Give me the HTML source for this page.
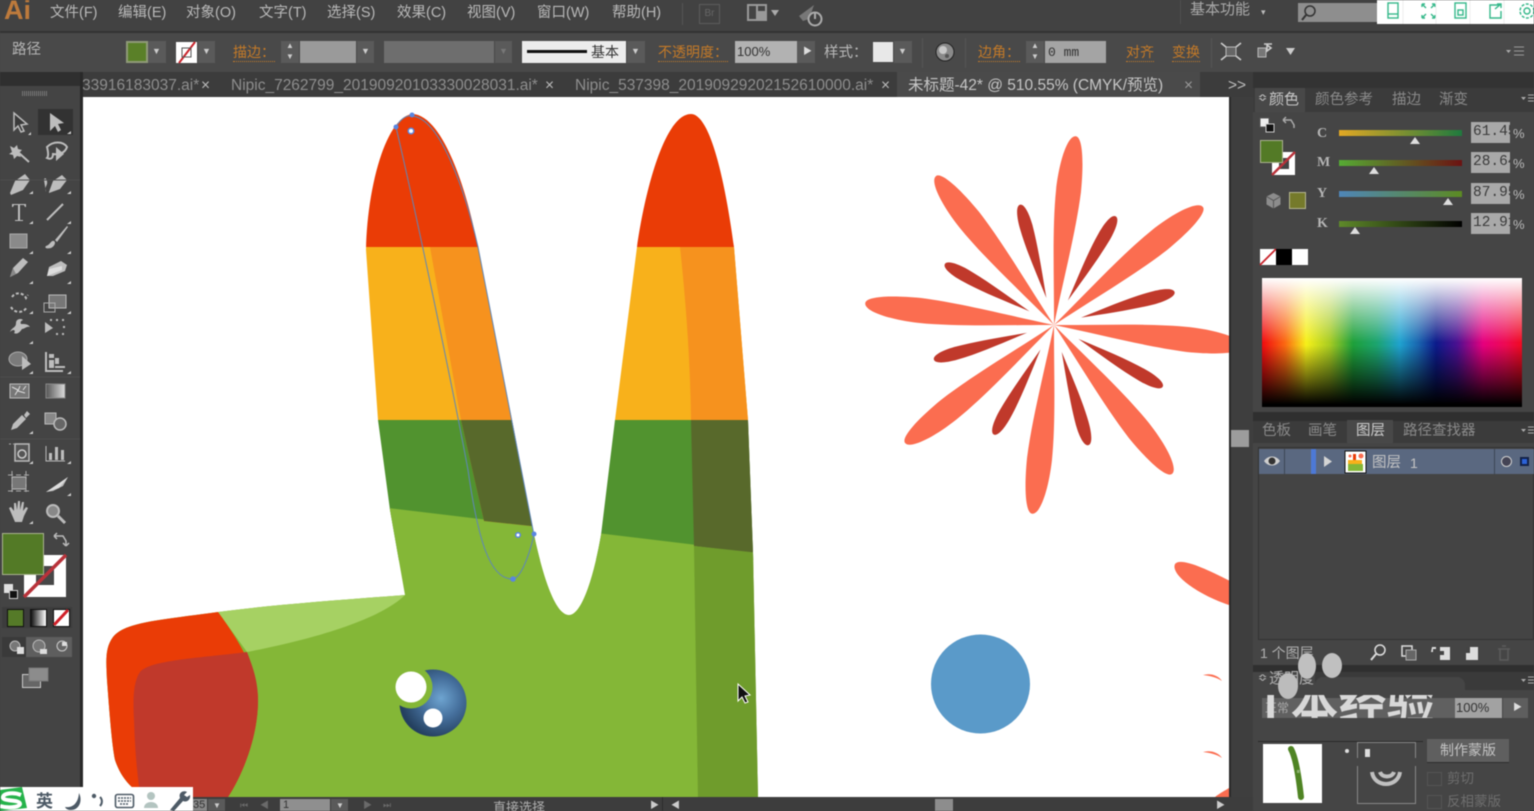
<!DOCTYPE html>
<html lang="zh"><head><meta charset="utf-8"><title>Illustrator</title>
<style>
html,body{margin:0;padding:0;background:#434343;}
#r{position:relative;width:1534px;height:811px;overflow:hidden;background:#444;font-family:"Liberation Sans","Noto Sans CJK SC",sans-serif;filter:blur(.45px);}
#r div,#r span.a{position:absolute;}
.t{position:absolute;white-space:nowrap;line-height:1;color:#bdbdbd;}
.m{font-size:14.5px;top:6px;color:#b9b9b9}
.o{font-size:14.5px;top:45px;color:#c47a28;border-bottom:1px dotted #c47a28;padding-bottom:2px}
.c{font-size:14.5px;top:46px;color:#b9b9b9}
.tab{font-size:15.5px;top:78px;color:#8e8e8e}
.p{font-size:15px;color:#8a8a8a}
.dd{background:#5a5a5a}
.lab{font-family:"Liberation Serif",serif;font-size:14px;font-weight:bold;color:#b5b5b5}
.val{background:#a9a9a9;width:39px;height:21px;left:1471px;font:14.5px/21px "Liberation Mono",monospace;color:#3a3a3a;text-indent:2px;overflow:hidden;white-space:nowrap}
.trk{left:1339px;width:123px;height:6px}
.th{width:0;height:0;border-left:5px solid transparent;border-right:5px solid transparent;border-bottom:7px solid #ddd}
svg{position:absolute;overflow:visible}
</style></head><body><div id="r">

<!-- top bars -->
<div style="left:0;top:0;width:1534px;height:31px;background:#424242"></div>
<div style="left:0;top:31px;width:1534px;height:2px;background:#333"></div>
<div style="left:0;top:33px;width:1534px;height:39px;background:#494949"></div>
<div style="left:0;top:72px;width:1534px;height:25px;background:#3c3c3c"></div>
<div style="left:0;top:72px;width:80px;height:14px;background:#2f2f2f"></div>

<span class="t" style="left:4px;top:-3px;font-size:27px;font-weight:bold;color:#bd7a3c">Ai</span>
<span class="t m" style="left:50px">文件(F)</span>
<span class="t m" style="left:118px">编辑(E)</span>
<span class="t m" style="left:186px">对象(O)</span>
<span class="t m" style="left:259px">文字(T)</span>
<span class="t m" style="left:327px">选择(S)</span>
<span class="t m" style="left:397px">效果(C)</span>
<span class="t m" style="left:467px">视图(V)</span>
<span class="t m" style="left:537px">窗口(W)</span>
<span class="t m" style="left:612px">帮助(H)</span>
<div style="left:682px;top:3px;width:1px;height:22px;background:#555"></div>
<div style="left:699px;top:4px;width:19px;height:18px;border:1px solid #5c5c5c;color:#666;font:10px/18px 'Liberation Sans';text-align:center">Br</div>
<svg style="left:746px;top:2px" width="90" height="26">
<rect x="1" y="2" width="20" height="17" fill="#999"/><rect x="3" y="4" width="7" height="13" fill="#444"/><rect x="12" y="4" width="7" height="5" fill="#444"/>
<path d="M25 8h8l-4 6z" fill="#aaa"/>
<path d="M53 14L68 3l-5 14-6 2z" fill="#777"/><circle cx="69" cy="17" r="6.5" fill="none" stroke="#aaa" stroke-width="2"/><path d="M69 10v7" stroke="#aaa" stroke-width="2"/></svg>
<div style="left:1180px;top:0;width:1px;height:24px;background:#4f4f4f"></div>
<span class="t" style="left:1190px;top:2px;font-size:15px;color:#a9a9a9">基本功能</span>
<span class="t" style="left:1261px;top:8px;font-size:9px;color:#bbb">▾</span>
<div style="left:1298px;top:3px;width:80px;height:19px;background:#8e8e8e"></div>
<svg style="left:1300px;top:4px" width="20" height="18"><circle cx="10" cy="7" r="5" fill="none" stroke="#333" stroke-width="1.5"/><path d="M6 11l-4 5" stroke="#333" stroke-width="2"/></svg>
<div style="left:1377px;top:0;width:157px;height:24px;background:#fff"></div>
<svg style="left:1377px;top:0" width="157" height="24" fill="none" stroke="#35b88a" stroke-width="1.4">
<rect x="11" y="3" width="10" height="15"/><path d="M11 14h10"/>
<path d="M45 4l4 4M58 4l-4 4M45 18l4-4M58 18l-4-4M45 4h3M45 4v3M58 4h-3M58 4v3M45 18h3M45 18v-3M58 18h-3M58 18v-3"/>
<rect x="78" y="3" width="11" height="15"/><rect x="81" y="10" width="5" height="5"/>
<path d="M122 5h-9v13h11v-7M118 9l6-5M120 4h4v4"/>
<circle cx="150" cy="11" r="3"/><circle cx="150" cy="11" r="7" stroke-dasharray="3 1.5"/>
<path d="M26 0v24M59 0v24M93 0v24M127 0v24" stroke="#eee" stroke-width="1"/></svg>

<!-- control bar -->
<span class="t" style="left:12px;top:43px;font-size:14.5px;color:#b5b5b5">路径</span>
<div style="left:126px;top:41px;width:22px;height:22px;background:#5a8028;box-sizing:border-box;border:2px solid #8f9a78"></div>
<div class="dd" style="left:148px;top:41px;width:18px;height:22px"></div><span class="t" style="left:152px;top:47px;font-size:9px;color:#ccc">▼</span>
<div style="left:176px;top:42px;width:21px;height:21px;background:#fff"></div>
<svg style="left:176px;top:42px" width="21" height="21"><path d="M3 21L19 0" stroke="#c8242c" stroke-width="2"/><rect x="6" y="6" width="9" height="9" fill="none" stroke="#555"/></svg>
<div class="dd" style="left:198px;top:41px;width:17px;height:22px"></div><span class="t" style="left:202px;top:47px;font-size:9px;color:#ccc">▼</span>
<span class="t o" style="left:233px;font-size:14px">描边：</span>
<div class="dd" style="left:281px;top:41px;width:18px;height:22px"></div><span class="t" style="left:286px;top:42px;font-size:8px;color:#ccc">▲</span><span class="t" style="left:286px;top:53px;font-size:8px;color:#ccc">▼</span>
<div style="left:300px;top:41px;width:56px;height:22px;background:#9a9a9a"></div>
<div class="dd" style="left:357px;top:41px;width:17px;height:22px"></div><span class="t" style="left:361px;top:47px;font-size:9px;color:#ccc">▼</span>
<div style="left:384px;top:41px;width:110px;height:22px;background:#6e6e6e"></div>
<div class="dd" style="left:495px;top:41px;width:17px;height:22px"></div><span class="t" style="left:499px;top:47px;font-size:9px;color:#777">▼</span>
<div style="left:522px;top:41px;width:104px;height:22px;background:#ececec"></div>
<div style="left:527px;top:50px;width:60px;height:3px;background:#111"></div>
<span class="t" style="left:591px;top:45px;font-size:14px;color:#333">基本</span>
<div class="dd" style="left:627px;top:41px;width:18px;height:22px"></div><span class="t" style="left:631px;top:47px;font-size:9px;color:#ccc">▼</span>
<span class="t o" style="left:658px;font-size:14px">不透明度：</span>
<div style="left:735px;top:41px;width:62px;height:22px;background:#b2b2b2"></div>
<span class="t" style="left:737px;top:45px;font-size:13px;color:#333">100%</span>
<div class="dd" style="left:797px;top:41px;width:18px;height:22px"></div><span class="t" style="left:803px;top:47px;font-size:9px;color:#ddd">▶</span>
<span class="t c" style="left:824px">样式：</span>
<div style="left:873px;top:42px;width:20px;height:20px;background:#e8e8e8"></div>
<div class="dd" style="left:894px;top:41px;width:18px;height:22px"></div><span class="t" style="left:898px;top:47px;font-size:9px;color:#ccc">▼</span>
<div style="left:922px;top:38px;width:1px;height:30px;background:#555"></div>
<svg style="left:934px;top:41px" width="22" height="22"><circle cx="11" cy="11" r="9" fill="#8a8a8a" stroke="#222"/><circle cx="9" cy="9" r="4" fill="#c8c8c8"/><circle cx="13" cy="15" r="2" fill="#555"/></svg>
<div style="left:965px;top:38px;width:1px;height:30px;background:#555"></div>
<span class="t o" style="left:978px;font-size:14px">边角：</span>
<div class="dd" style="left:1026px;top:41px;width:18px;height:22px"></div><span class="t" style="left:1031px;top:42px;font-size:8px;color:#ccc">▲</span><span class="t" style="left:1031px;top:53px;font-size:8px;color:#ccc">▼</span>
<div style="left:1045px;top:41px;width:61px;height:22px;background:#a4a4a4"></div>
<span class="t" style="left:1048px;top:45px;font:13px 'Liberation Mono',monospace;color:#333">0 mm</span>
<span class="t o" style="left:1126px;font-size:14px">对齐</span>
<span class="t o" style="left:1172px;font-size:14px">变换</span>
<div style="left:1211px;top:38px;width:1px;height:30px;background:#555"></div>
<svg style="left:1220px;top:42px" width="90" height="20" fill="none" stroke="#ccc" stroke-width="1.6">
<rect x="6" y="5" width="10" height="9" fill="#666" stroke="#bbb" stroke-width="1"/><path d="M1 1l5 4M21 1l-5 4M1 18l5-4M21 18l-5-4"/>
<rect x="38" y="6" width="8" height="9" fill="#777" stroke="#bbb" stroke-width="1"/><path d="M47 3l4 3-4 3zM44 2l8 0"/>
<path d="M66 6h9l-4.500 7z" fill="#ccc" stroke="none"/></svg>
<svg style="left:1505px;top:46px" width="22" height="12"><path d="M1 4h5l-2.500 3z" fill="#aaa"/><path d="M9 1h10M9 5h10M9 9h10" stroke="#999"/></svg>

<!-- tabs -->
<div style="left:897px;top:72px;width:303px;height:25px;background:#4a4a4a"></div>
<span class="t tab" style="left:82px">33916183037.ai*</span><span class="t tab" style="left:201px;color:#bbb">×</span>
<span class="t tab" style="left:231px">Nipic_7262799_20190920103330028031.ai*</span><span class="t tab" style="left:545px;color:#bbb">×</span>
<span class="t tab" style="left:575px">Nipic_537398_20190929202152610000.ai*</span><span class="t tab" style="left:881px;color:#bbb">×</span>
<span class="t tab" style="left:908px;color:#c6c6c6">未标题-42* @ 510.55% (CMYK/预览)</span><span class="t tab" style="left:1184px;color:#999">×</span>
<span class="t tab" style="left:1228px;color:#bbb">&gt;&gt;</span>

<!-- left toolbox -->
<div style="left:0;top:86px;width:80px;height:725px;background:#444"></div>
<div style="left:22px;top:91px;width:26px;height:5px;background:repeating-linear-gradient(90deg,#777 0 1px,#444 1px 2px)"></div>
<div style="left:80px;top:72px;width:3px;height:739px;background:#292929"></div>
<div style="left:38px;top:109px;width:35px;height:26px;background:#323232"></div>

<svg style="left:0;top:100px" width="80" height="430">
<g fill="#bdbdbd" stroke="none">
<path d="M14 13l0 17 4-4 3 6 3-1-3-6 6-1z" fill="#3a3a3a" stroke="#bbb" stroke-width="1.5"/>
<path d="M50 13l0 18 5-5 3 6 3-2-3-6 6-1z"/>
<path d="M10 46l4 2 3-3 1 4 4 1-3 3 2 4-4-1-3 3-1-4-4-1 3-2z"/><path d="M19 53l10 9" stroke="#bdbdbd" stroke-width="2"/>
<path d="M47 47c6-6 16-6 20 0-2 6-8 8-14 7 0 4-2 6-6 4 2-2 1-7 0-11z" fill="none" stroke="#bdbdbd" stroke-width="2"/><path d="M56 47l0 14 8-7z"/>
<path d="M10 93l5-12 10-7 5 6-7 10-12 5zM16 84l3 3" />
<path d="M46 92c-2-6 2-6 1-11-1-4-3-3-3-1M49 92l4-11 9-6 5 5-7 9-11 4z"/>
<path d="M12 104h14v3h-1l-1-2h-4v15h3v1H15v-1h3v-15h-4l-1 2h-1z"/>
<path d="M47 120l16-16" stroke="#bdbdbd" stroke-width="2"/>
<rect x="10" y="134" width="17" height="14" fill="#8a8a8a" stroke="#aaa"/>
<path d="M46 146c4-1 5-6 8-5 2 1 1 5-3 7-4 1-7 0-5-2zM55 140l12-14 1 1-11 15z"/>
<path d="M10 177l3-9 10-10 5 4-10 11z"/><path d="M10 177l3-9 3 6z" fill="#888"/>
<path d="M47 176l2-9 12-6 6 4-2 6-12 5z"/><path d="M47 176l15-6v-4l-13 3z" fill="#ddd"/>
<path d="M12 197a8 8 0 0 1 14 1l2-3M11 207a9 9 0 0 0 16 0" fill="none" stroke="#bdbdbd" stroke-width="2" stroke-dasharray="3 2"/>
<rect x="49" y="195" width="17" height="13" fill="#777" stroke="#bbb"/><rect x="44" y="203" width="11" height="9" fill="none" stroke="#aaa"/>
<path d="M10 232c2-5 6-4 6-9 0-4 5-5 7-3-2 1-3 2-2 4 4 0 7 0 9 3-4-1-5 2-8 2-2 3-5 6-8 4 2-2 0-5-4-1z"/>
<path d="M45 222l0 11 8-5z"/><path d="M50 220h2M56 220h2M62 220h2M64 226v2M62 234h2M56 234h2" stroke="#bbb" stroke-width="2"/>
<ellipse cx="18" cy="259" rx="9" ry="7" fill="#7b7b7b" stroke="#aaa"/><path d="M22 256l0 14 9-6z"/>
<path d="M46 252v19h17" fill="none" stroke="#bdbdbd" stroke-width="2"/><path d="M49 254l5 0v4h-5zM55 258h4v6h-4zM49 260h5v8h-5zM55 266h10v2H55z"/>
<rect x="10" y="284" width="19" height="14" fill="#777" stroke="#bbb"/><path d="M12 287l6 3-3 5M20 286l-2 5 7 2M26 286l-3 4" stroke="#ddd" fill="none"/>
<defs><linearGradient id="g1"><stop offset="0" stop-color="#555"/><stop offset="1" stop-color="#ddd"/></linearGradient></defs>
<rect x="46" y="284" width="19" height="14" fill="url(#g1)" stroke="#888"/>
<path d="M11 330l2-6 9-9 4 4-9 9zM24 315l3-4 3 3-4 4z"/>
<rect x="45" y="313" width="11" height="11" fill="#888" stroke="#bbb"/><circle cx="60" cy="324" r="6" fill="#666" stroke="#bbb" stroke-width="1.500"/>
<rect x="15" y="344" width="14" height="17" fill="#555" stroke="#bbb" stroke-width="1.500"/><circle cx="22" cy="354" r="4" fill="none" stroke="#ccc" stroke-width="1.500"/><path d="M9 344h2M13 344h1" stroke="#aaa"/>
<path d="M46 346v15h19" fill="none" stroke="#bbb"/><rect x="49" y="353" width="3" height="7"/><rect x="55" y="347" width="3" height="13"/><rect x="61" y="350" width="3" height="10"/>
<rect x="12" y="377" width="14" height="12" fill="#777" stroke="#bbb"/><path d="M8 375h22M8 391h22M12 371v24M26 371v24" stroke="#aaa" stroke-dasharray="5 3" fill="none"/>
<path d="M46 392l8-5 14-10-5 9-10 5z"/><path d="M46 392l22-15-9 11z" fill="#ddd"/>
<path d="M12 415l-3-7 2-1 3 4 0-8h2l1 7 1-9h2l0 9 2-8h2l-1 9 3-4 2 1-4 8-2 6H15z"/>
<circle cx="53" cy="411" r="6" fill="#888" stroke="#bbb" stroke-width="2"/><path d="M58 416l7 7" stroke="#bbb" stroke-width="3"/>
</g>
<g fill="#ccc"><path d="M28 35l3 0 0-3zM71 31l-4 3h4z"/>
<path d="M33 91l-4 3h4zM71 91l-4 3h4zM33 121l-4 3h4zM71 121l-4 3h4zM33 151l-4 3h4zM71 151l-4 3h4zM33 181l-4 3h4zM71 181l-4 3h4zM33 211l-4 3h4zM71 211l-4 3h4zM33 241l-4 3h4zM33 271l-4 3h4zM71 271l-4 3h4zM33 331l-4 3h4zM33 361l-4 3h4zM71 361l-4 3h4zM71 393l-4 3h4zM33 421l-4 3h4z"/></g>
<path d="M0 80h80M0 277h80M0 339h80" stroke="#4d4d4d"/>
</svg>

<div style="left:24px;top:555px;width:42px;height:42px;background:#fff"></div>
<div style="left:36px;top:566px;width:18px;height:19px;background:#474747"></div>
<svg style="left:24px;top:555px" width="42" height="42"><path d="M0 42L42 0" stroke="#b8323a" stroke-width="3.500"/></svg>
<div style="left:2px;top:533px;width:42px;height:42px;background:#537a26;box-sizing:border-box;border:1px solid #a9b38e"></div>
<svg style="left:52px;top:531px" width="18" height="18" fill="none" stroke="#bbb" stroke-width="1.500"><path d="M2 5h9l3 5v4M2 5l3-3M2 5l3 3M14 15l-3-3M14 15l3-3"/></svg>
<div style="left:4px;top:584px;width:9px;height:9px;background:#e0e0e0"></div>
<div style="left:9px;top:590px;width:7px;height:7px;background:#111;border:1px solid #ccc"></div>
<div style="left:2px;top:607px;width:70px;height:21px;background:#3c3c3c"></div>
<div style="left:7px;top:609px;width:15px;height:16px;background:#557a28;border:1px solid #111"></div>
<div style="left:30px;top:609px;width:15px;height:16px;background:linear-gradient(90deg,#111,#fff);border:1px solid #111"></div>
<div style="left:53px;top:609px;width:15px;height:16px;background:#fff;border:1px solid #111"></div>
<svg style="left:53px;top:609px" width="16" height="17"><path d="M1 16L15 1" stroke="#d01f28" stroke-width="3"/></svg>
<div style="left:2px;top:637px;width:24px;height:20px;background:#3a3a3a"></div>
<div style="left:26px;top:637px;width:46px;height:20px;background:#5e5e5e"></div>
<svg style="left:2px;top:637px" width="70" height="20"><circle cx="13" cy="9" r="5" fill="#777" stroke="#bbb"/><rect x="15" y="10" width="7" height="7" fill="#ddd"/><circle cx="37" cy="9" r="6" fill="#777" stroke="#bbb"/><rect x="38" y="12" width="7" height="5" fill="#ddd"/><circle cx="60" cy="9" r="5" fill="#666" stroke="#ccc"/><path d="M60 5h5v4h-5z" fill="#ddd"/></svg>
<svg style="left:22px;top:667px" width="28" height="22"><rect x="0.500" y="7.500" width="18" height="13" fill="#666" stroke="#ccc"/><rect x="7" y="1" width="19" height="13" fill="#8c8c8c" stroke="#777"/></svg>

<!-- canvas -->
<div style="left:83px;top:97px;width:1146px;height:700px;background:#fff"></div>
<svg style="left:0;top:0" width="1534" height="811">
<defs>
<clipPath id="canvas"><rect x="83" y="97" width="1146" height="700"/></clipPath>
<path id="sil" d="M412 114C385 118 367 190 366 250L378 420L390 510L405 595C340 600 270 605 218 612C160 620 125 622 113 637C105 648 106 660 107 680C110 720 112 745 115 760C120 775 130 790 148 797L758 797L753 552L748 420L734 247C725 180 710 114 691 114C665 114 645 190 637 247L615 420L601 535C595 570 583 615 569 615C555 615 542 575 532 525L512 420L478 247C465 180 440 114 412 114Z"/>
<clipPath id="sc"><use href="#sil"/></clipPath>
<path id="big" d="M0 0C45-5 95-13 135-13.500C165-13.500 190-8 190 0C190 7 165 11 135 11.500C95 11 45 4 0 0Z"/>
<path id="small" d="M28 0C55-3 80-6.500 102-6.500C116-6.500 125-4 125 0C125 4 116 6.500 102 6.500C80 6 55 3 28 0Z"/>
<radialGradient id="eye" cx="0.620" cy="0.430" r="0.600"><stop offset="0" stop-color="#6ea4d0"/><stop offset="0.500" stop-color="#456f9c"/><stop offset="1" stop-color="#24405f"/></radialGradient>
</defs>
<g clip-path="url(#canvas)">
<g clip-path="url(#sc)">
<rect x="83" y="97" width="700" height="150" fill="#ea3c06"/>
<rect x="83" y="247" width="700" height="173" fill="#f8b11b"/>
<rect x="83" y="420" width="700" height="140" fill="#51932f"/>
<path d="M380 507L780 555V800H80V507Z" fill="#84b737"/>
<path d="M430 247L478 247 512 420 540 527 484 521 461 420Z" fill="#f6921e"/>
<path d="M461 420L512 420 540 527 484 521Z" fill="#58692b"/>
<path d="M680 247H760V420H691Q690 340 680 247Z" fill="#f6921e"/>
<path d="M691 420H760V554L694 546Z" fill="#58692b"/>
<path d="M694 546L760 553V800H698Z" fill="#6f9c2c"/>
<path d="M218 612C280 602 350 598 405 595C380 620 310 640 247 652Z" fill="#a6d163"/>
<path d="M218 612C235 635 258 670 258 700C258 740 240 780 226 800H90V600Z" fill="#ea3c06"/>
<path d="M247 652C200 658 150 660 140 672C133 682 133 700 134 720C135 750 137 775 141 800H226C240 780 258 740 258 700C258 680 252 665 247 652Z" fill="#c0392b"/>
</g>
<circle cx="433" cy="703" r="33.500" fill="url(#eye)"/>
<circle cx="411" cy="687" r="21.500" fill="#84b737"/>
<circle cx="411" cy="687" r="15.500" fill="#fff"/>
<circle cx="433" cy="718" r="9.500" fill="#fff"/>
<path d="M396 127C400 120 405 115 412 116C440 118 465 190 478 247L534 535C528 560 520 578 513 579C490 580 478 540 468 470C455 400 420 230 396 127Z" fill="none" stroke="#5f86b8" stroke-width="1"/>
<g fill="#5a86e0"><circle cx="396" cy="127" r="2.500"/><circle cx="412" cy="115" r="2.500"/><circle cx="534" cy="534" r="2.500"/><circle cx="513" cy="579" r="2.800"/></g>
<circle cx="411" cy="131" r="2.800" fill="#fff" stroke="#5a86e0" stroke-width="1.500"/>
<circle cx="518" cy="535" r="2.300" fill="#fff" stroke="#5a86e0" stroke-width="1.500"/>

<g transform="translate(1054 325)" fill="#fb6d50">
<use href="#big" transform="rotate(-83.400)"/><use href="#big" transform="rotate(-38.400)"/><use href="#big" transform="rotate(6.600)"/><use href="#big" transform="rotate(51.600)"/><use href="#big" transform="rotate(96.600)"/><use href="#big" transform="rotate(141.600)"/><use href="#big" transform="rotate(186.600)"/><use href="#big" transform="rotate(231.600)"/>
</g>
<g transform="translate(1054 325)" fill="#c0392b">
<use href="#small" transform="rotate(254.200)"/><use href="#small" transform="rotate(-60.400)"/><use href="#small" transform="rotate(-15.300)"/><use href="#small" transform="rotate(29.600)"/><use href="#small" transform="rotate(74)"/><use href="#small" transform="rotate(118.800)"/><use href="#small" transform="rotate(163.900)"/><use href="#small" transform="rotate(209.200)"/>
</g>
<path d="M1232 582C1205 568 1180 557 1175 564C1170 575 1200 596 1232 606Z" fill="#fb6d50"/>
<path d="M1203 675C1210 673 1218 675 1222 681C1216 677 1210 676 1203 675Z" fill="#fb6d50"/>
<path d="M1203 752C1210 750 1218 752 1222 758C1216 754 1210 753 1203 752Z" fill="#fb6d50"/>
<path d="M1215 797C1220 793 1226 790 1229 788V797Z" fill="#fb6d50"/>
<circle cx="980.500" cy="684" r="49.500" fill="#5a9ac9"/>
</g>
<path d="M738 684V701L742 697L745 703L748 702L745 696L750 695Z" fill="#111" stroke="#fff" stroke-width="1"/>
</svg>

<!-- vertical scrollbar / dock gutter -->
<div style="left:1229px;top:97px;width:24px;height:700px;background:#3e3e3e"></div>
<div style="left:1229px;top:97px;width:2px;height:714px;background:#2a2a2a"></div>
<div style="left:1231px;top:430px;width:18px;height:17px;background:#9c9c9c"></div>

<!-- right dock -->
<div style="left:1253px;top:72px;width:281px;height:739px;background:#454545"></div>
<div style="left:1253px;top:72px;width:281px;height:16px;background:#333"></div>
<div style="left:1253px;top:88px;width:281px;height:24px;background:#3b3b3b"></div>
<div style="left:1255px;top:88px;width:50px;height:24px;background:#484848"></div>
<span class="t p" style="left:1258px;top:93px;color:#ccc;font-size:11px">≎</span>
<span class="t p" style="left:1269px;top:92px;color:#c8c8c8">颜色</span>
<span class="t p" style="left:1315px;top:93px;font-size:14.500px">颜色参考</span>
<span class="t p" style="left:1392px;top:93px;font-size:14.500px">描边</span>
<span class="t p" style="left:1439px;top:93px;font-size:14.500px">渐变</span>
<svg style="left:1521px;top:94px" width="13" height="10"><path d="M0 3h5L2.500 6z" fill="#aaa"/><path d="M7 1h8M7 4h8M7 7h8" stroke="#aaa"/></svg>

<svg style="left:1258px;top:114px" width="40" height="22"><rect x="2" y="4" width="9" height="9" fill="#eee" stroke="#555"/><rect x="8" y="10" width="8" height="8" fill="#111" stroke="#ccc"/><path d="M25 6h8l3 5v3M25 6l3-3M25 6l3 3" fill="none" stroke="#aaa" stroke-width="1.500"/></svg>
<div style="left:1272px;top:152px;width:23px;height:23px;background:#fff"></div>
<div style="left:1279px;top:158px;width:10px;height:11px;background:#444"></div>
<svg style="left:1272px;top:152px" width="23" height="23"><path d="M0 23L23 0" stroke="#b8323a" stroke-width="2.500"/></svg>
<div style="left:1260px;top:140px;width:23px;height:23px;background:#537a26;box-sizing:border-box;border:1px solid #aab38f"></div>
<svg style="left:1265px;top:192px" width="17" height="17"><path d="M8.500 1l7 3.500v8l-7 4-7-4v-8z" fill="#8c8c8c"/><path d="M1.500 4.500l7 4 7-4M8.500 8.500v8" stroke="#555" fill="none"/></svg>
<div style="left:1289px;top:192px;width:17px;height:17px;background:#757a2b;box-sizing:border-box;border:1px solid #b5b590"></div>

<span class="t lab" style="left:1317px;top:127px">C</span>
<span class="t lab" style="left:1317px;top:156px">M</span>
<span class="t lab" style="left:1317px;top:187px">Y</span>
<span class="t lab" style="left:1317px;top:217px">K</span>
<div class="trk" style="top:130px;background:linear-gradient(90deg,#e2a824,#1f7a3e)"></div>
<div class="trk" style="top:160px;background:linear-gradient(90deg,#56ab34,#6c1212)"></div>
<div class="trk" style="top:191px;background:linear-gradient(90deg,#4f86b8,#5c8b22)"></div>
<div class="trk" style="top:221px;background:linear-gradient(90deg,#5f8a2a,#000)"></div>
<div class="th" style="left:1410px;top:137px"></div>
<div class="th" style="left:1369px;top:167px"></div>
<div class="th" style="left:1443px;top:198px"></div>
<div class="th" style="left:1350px;top:227px"></div>
<div class="val" style="top:122px">61.45</div><span class="t" style="left:1513px;top:127px;font-size:13px;color:#bbb">%</span>
<div class="val" style="top:152px">28.64</div><span class="t" style="left:1513px;top:157px;font-size:13px;color:#bbb">%</span>
<div class="val" style="top:183px">87.95</div><span class="t" style="left:1513px;top:188px;font-size:13px;color:#bbb">%</span>
<div class="val" style="top:213px">12.91</div><span class="t" style="left:1513px;top:218px;font-size:13px;color:#bbb">%</span>

<div style="left:1260px;top:249px;width:16px;height:16px;background:#fff"></div>
<svg style="left:1260px;top:249px" width="16" height="16"><path d="M0 16L16 0" stroke="#c8242c" stroke-width="1.800"/></svg>
<div style="left:1276px;top:249px;width:16px;height:16px;background:#000"></div>
<div style="left:1292px;top:249px;width:16px;height:16px;background:#fff"></div>

<div style="left:1262px;top:278px;width:260px;height:129px;background:
linear-gradient(180deg,#fff 0%,rgba(255,255,255,0.55) 22%,rgba(255,255,255,0) 50%,rgba(0,0,0,0) 52%,rgba(0,0,0,0.55) 78%,#000 98%),
linear-gradient(90deg,#f00a10 0%,#fb6a12 9%,#f6f01a 17%,#a8cc22 26%,#1ea03a 35%,#1ca46e 44%,#1fa2cf 53%,#1a66b0 60%,#0c1a8a 67%,#4a1090 75%,#e6007e 85%,#ee0a50 94%,#f00a20 100%)"></div>

<!-- layers panel -->
<div style="left:1253px;top:412px;width:281px;height:9px;background:#2f2f2f"></div>
<div style="left:1253px;top:421px;width:281px;height:22px;background:#3b3b3b"></div>
<div style="left:1347px;top:420px;width:46px;height:23px;background:#484848"></div>
<span class="t p" style="left:1262px;top:424px;font-size:14.500px">色板</span>
<span class="t p" style="left:1308px;top:424px;font-size:14.500px">画笔</span>
<span class="t p" style="left:1356px;top:424px;font-size:14.500px;color:#cdcdcd">图层</span>
<span class="t p" style="left:1403px;top:424px;font-size:14.500px">路径查找器</span>
<svg style="left:1521px;top:426px" width="13" height="10"><path d="M0 3h5L2.500 6z" fill="#aaa"/><path d="M7 1h8M7 4h8M7 7h8" stroke="#aaa"/></svg>
<div style="left:1258px;top:447px;width:276px;height:193px;box-sizing:border-box;border:1px solid #333;background:#444"></div>
<div style="left:1259px;top:449px;width:275px;height:25px;background:#5a6880"></div>
<div style="left:1284px;top:449px;width:1px;height:25px;background:#3c4656"></div>
<div style="left:1311px;top:449px;width:5px;height:25px;background:#4d79d6"></div>
<div style="left:1494px;top:449px;width:1px;height:25px;background:#3c4656"></div>
<svg style="left:1263px;top:454px" width="18" height="14"><path d="M1 7C5 1 13 1 17 7C13 13 5 13 1 7Z" fill="#cfcfcf"/><circle cx="9" cy="7" r="3.500" fill="#333"/></svg>
<svg style="left:1322px;top:455px" width="12" height="13"><path d="M2 1L10 6.500L2 12Z" fill="#d4d4d4"/></svg>
<svg style="left:1345px;top:451px" width="21" height="22"><rect width="21" height="22" fill="#fff" stroke="#111"/><rect x="8" y="3" width="3" height="6" fill="#ea3c06"/><rect x="3" y="9" width="14" height="4" fill="#f8b11b"/><rect x="3" y="13" width="15" height="7" fill="#84b737"/><circle cx="16" cy="5" r="2.500" fill="#fb6d50"/><circle cx="5" cy="5" r="1.500" fill="#fb6d50"/></svg>
<span class="t" style="left:1372px;top:456px;font-size:14.500px;color:#c4c4c4">图层</span>
<span class="t" style="left:1410px;top:456px;font-size:14px;color:#c4c4c4">1</span>
<div style="left:1501px;top:456px;width:9px;height:9px;border-radius:50%;border:1.500px solid #d0d0d0;background:#445"></div>
<div style="left:1520px;top:457px;width:5px;height:5px;background:#2c62d8;border:2px solid #12224a"></div>

<span class="t" style="left:1260px;top:646px;font-size:14px;color:#b0b0b0">1 个图层</span>
<svg style="left:1368px;top:643px" width="150" height="20">
<circle cx="12" cy="7" r="5" fill="none" stroke="#ddd" stroke-width="1.500"/><path d="M8 11l-5 6" stroke="#ddd" stroke-width="2"/>
<rect x="34" y="3" width="10" height="10" fill="none" stroke="#ddd" stroke-width="1.500"/><rect x="38" y="7" width="10" height="10" fill="#666" stroke="#aaa"/>
<path d="M64 4h4v2h-3v3h-2zM72 4h10v13H72z" fill="#ddd"/><path d="M72 8h4v4h-4z" fill="#444"/>
<path d="M98 4h12v13H98z" fill="#ddd"/><path d="M98 4v6h4V4z" fill="#444"/>
<path d="M130 6h12M132 6v11h8V6M134 3h4" stroke="#5c5c5c" fill="none" stroke-width="1.500"/>
</svg>

<!-- transparency panel -->
<div style="left:1253px;top:665px;width:281px;height:7px;background:#2f2f2f"></div>
<div style="left:1315px;top:672px;width:219px;height:18px;background:#3a3a3a"></div>
<div style="left:1315px;top:677px;width:150px;height:20px;border-radius:8px;background:#454545"></div>
<span class="t" style="left:1258px;top:673px;font-size:11px;color:#bbb">≎</span>
<span class="t p" style="left:1269px;top:671px;font-size:15px;color:#b0b0b0">透明度</span>
<svg style="left:1521px;top:676px" width="13" height="10"><path d="M0 3h5L2.500 6z" fill="#aaa"/><path d="M7 1h8M7 4h8M7 7h8" stroke="#aaa"/></svg>
<div style="left:1262px;top:698px;width:240px;height:20px;background:#606060"></div>
<div style="left:1455px;top:698px;width:47px;height:20px;background:#a2a2a2"></div>
<span class="t" style="left:1456px;top:701px;font-size:13px;color:#333">100%</span>
<div style="left:1503px;top:698px;width:25px;height:20px;background:#5e5e5e"></div>
<span class="t" style="left:1513px;top:703px;font-size:9px;color:#ddd">▶</span>
<span class="t" style="left:1265px;top:702px;font-size:12px;color:#aaa">正常</span>

<!-- watermark -->
<div style="left:1298px;top:653px;width:18px;height:26px;border-radius:50%;background:#c0c0c0"></div>
<div style="left:1322px;top:653px;width:20px;height:25px;border-radius:50%;background:#c0c0c0"></div>
<div style="left:1278px;top:673px;width:20px;height:26px;border-radius:50%;background:#bcbcbc"></div>
<div style="left:1256px;top:695px;width:205px;height:23px;overflow:hidden">
<span class="t" style="left:8px;top:-14px;font-size:48px;font-weight:bold;color:#d8d8d8">i 本经验</span>
</div>

<div style="left:1258px;top:741px;width:165px;height:1px;background:#2a2a2a"></div>
<div style="left:1263px;top:744px;width:59px;height:59px;background:#fff"></div>
<svg style="left:1263px;top:744px" width="59" height="59"><path d="M28 5C33 14 36 35 38 53" stroke="#4f8424" stroke-width="6" fill="none" stroke-linecap="round"/></svg>
<div style="left:1357px;top:742px;width:59px;height:62px;box-sizing:border-box;border:1px solid #888"></div>
<div style="left:1357px;top:758px;width:59px;height:8px;background:#454545"></div>
<div style="left:1345px;top:749px;width:4px;height:4px;background:#ddd;border-radius:50%"></div>
<div style="left:1365px;top:749px;width:5px;height:8px;background:#ddd"></div>
<svg style="left:1370px;top:770px" width="32" height="22"><path d="M2 2C4 18 28 18 30 2M10 2C12 8 22 8 24 2" fill="none" stroke="#c0c0c0" stroke-width="4"/></svg>
<div style="left:1427px;top:739px;width:82px;height:23px;background:#5f5f5f;border-bottom:1px solid #2e2e2e"></div>
<span class="t" style="left:1440px;top:743px;font-size:14px;color:#c4c4c4">制作蒙版</span>
<div style="left:1427px;top:772px;width:13px;height:12px;border:1px solid #555"></div>
<span class="t" style="left:1447px;top:772px;font-size:13.500px;color:#6e6e6e">剪切</span>
<div style="left:1427px;top:795px;width:13px;height:12px;border:1px solid #555"></div>
<span class="t" style="left:1447px;top:795px;font-size:13.500px;color:#6e6e6e">反相蒙版</span>
<span class="t" style="left:1262px;top:750px;font-size:29px;color:rgba(255,255,255,.35)">an.b</span>

<!-- status bar -->
<div style="left:83px;top:797px;width:1170px;height:14px;background:#3d3d3d"></div>
<div style="left:193px;top:799px;width:14px;height:12px;background:#888"></div>
<span class="t" style="left:193px;top:800px;font-size:11px;color:#333">35</span>
<div style="left:208px;top:799px;width:17px;height:12px;background:#5a5a5a"></div><span class="t" style="left:213px;top:802px;font-size:8px;color:#ccc">▼</span>
<span class="t" style="left:240px;top:801px;font-size:9px;color:#6a6a6a">⏮</span>
<span class="t" style="left:260px;top:801px;font-size:9px;color:#6a6a6a">◀</span>
<div style="left:280px;top:799px;width:50px;height:12px;background:#8f8f8f"></div>
<span class="t" style="left:283px;top:800px;font-size:11px;color:#333">1</span>
<div style="left:331px;top:799px;width:17px;height:12px;background:#5a5a5a"></div><span class="t" style="left:336px;top:802px;font-size:8px;color:#ccc">▼</span>
<span class="t" style="left:363px;top:801px;font-size:9px;color:#6a6a6a">▶</span>
<span class="t" style="left:383px;top:801px;font-size:9px;color:#6a6a6a">⏭</span>
<span class="t" style="left:493px;top:801px;font-size:13px;color:#b0b0b0">直接选择</span>
<span class="t" style="left:650px;top:801px;font-size:9px;color:#ccc">▶</span>
<div style="left:662px;top:797px;width:1px;height:14px;background:#2c2c2c"></div>
<span class="t" style="left:671px;top:801px;font-size:9px;color:#ccc">◀</span>
<div style="left:935px;top:799px;width:18px;height:12px;background:#8d8d8d"></div>
<span class="t" style="left:1216px;top:801px;font-size:9px;color:#ccc">▶</span>

<!-- IME bar -->
<div style="left:0;top:787px;width:193px;height:24px;background:#fff"></div>
<svg style="left:0;top:784px" width="193" height="27">
<path d="M0 6L22 3L27 24L0 27Z" fill="#25b34a"/>
<path d="M21 11C14 8 4 9 3 13C2 18 20 15 20 20C19 24 6 24 0 22" fill="none" stroke="#fff" stroke-width="4"/>
<path d="M65 23C71 24 78 21 79 9C83 17 79 26 71 26C68 26 66 25 65 23Z" fill="#4d5a66"/>
<circle cx="94" cy="12" r="2.200" fill="#4d5a66"/><path d="M100 13C103 16 102 20 100 22" stroke="#4d5a66" stroke-width="2" fill="none"/>
<rect x="115.500" y="10.500" width="18" height="13" rx="2" fill="none" stroke="#4d5a66" stroke-width="1.600"/><path d="M118 14h13M118 17h13M120 20h9" stroke="#4d5a66" stroke-width="1.600" stroke-dasharray="2 1"/>
<circle cx="151" cy="12" r="4" fill="#b3c4c0"/><path d="M144 24C144 16 158 16 158 24Z" fill="#b3c4c0"/>
<path d="M170 26L180 14C178 8 184 6 187 8L184 11L187 13L190 11C191 15 187 19 183 17L174 27Z" fill="#4d5a66"/>
</svg>
<span class="t" style="left:36px;top:793px;font-size:17px;font-weight:bold;color:#4d5a66">英</span>

</div></body></html>
